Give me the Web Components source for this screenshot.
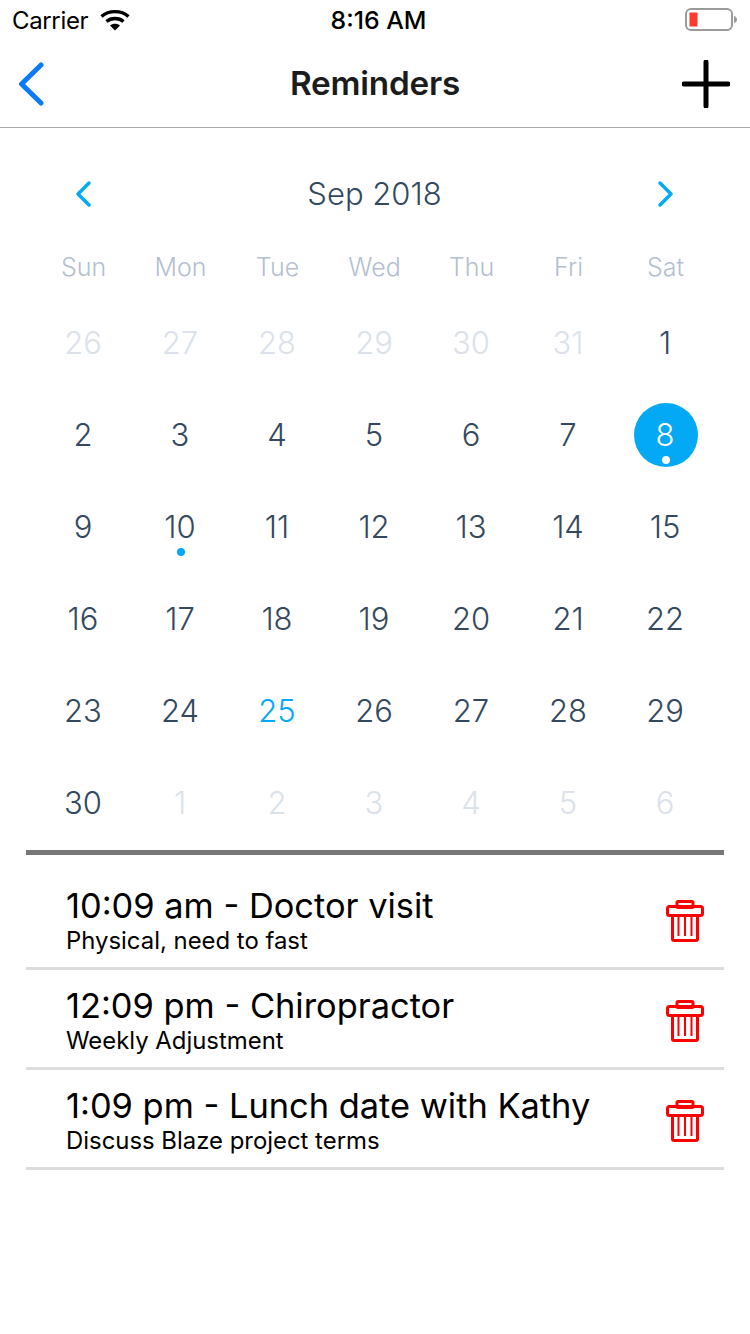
<!DOCTYPE html>
<html><head><meta charset="utf-8"><style>
html,body{margin:0;padding:0;background:#fff}
body{width:750px;height:1334px;overflow:hidden;font-family:Inter,"Liberation Sans",sans-serif}
</style></head><body>
<app-page>
<status-bar></status-bar>
<nav-bar title="Reminders"></nav-bar>
<cal-month></cal-month>
<reminder-list>
<reminder-row title="10:09 am - Doctor visit" sub="Physical, need to fast"></reminder-row>
<reminder-row title="12:09 pm - Chiropractor" sub="Weekly Adjustment"></reminder-row>
<reminder-row title="1:09 pm - Lunch date with Kathy" sub="Discuss Blaze project terms"></reminder-row>
</reminder-list>
</app-page>
<script>
function def(name,html){customElements.define(name,class extends HTMLElement{connectedCallback(){if(this.shadowRoot)return;const r=this.attachShadow({mode:'open'});r.innerHTML=typeof html==='function'?html(this):html;}});}
def('app-page','<style>:host{display:flex;flex-direction:column;width:750px;height:1334px}</style><slot></slot>');
def('status-bar',`<style>:host{display:flex;height:40px;align-items:center;justify-content:space-between;padding:0 12px;box-sizing:border-box;position:relative;color:#000}
.l{display:flex;align-items:center;gap:12px;font-size:24px;letter-spacing:-.35px}
.t{position:absolute;left:0;right:0;text-align:center;font-size:24.800px;font-weight:500;padding-left:7px}
svg{display:block}</style>
<div class="l"><span>Carrier</span><svg width="30" height="22" viewBox="0 0 30 22"><path d="M1.500 7.500C8.800 1 21.200 1 28.500 7.500" fill="none" stroke="#000" stroke-width="3.400" /><path d="M6.500 12.500C11 8.500 19 8.500 23.500 12.500" fill="none" stroke="#000" stroke-width="3.400"/><path d="M10 16.500C12.600 14 17.400 14 20 16.500L15 21.500Z" fill="#000"/></svg></div>
<div class="t">8:16 AM</div>
<svg width="53" height="24" viewBox="0 0 53 24"><rect x="1" y="1" width="46" height="21" rx="5" fill="none" stroke="#9b9b9b" stroke-width="2"/><rect x="4.500" y="4.500" width="8" height="14" fill="#ff3b30"/><path d="M49 8c2 .5 3 2 3 3.500s-1 3-3 3.500z" fill="#9b9b9b"/></svg>`);
def('nav-bar',h=>`<style>:host{display:flex;height:88px;align-items:center;justify-content:space-between;border-bottom:1px solid #aaa;box-sizing:border-box;position:relative;padding:0 20px 0 18px}
.t{position:absolute;left:0;right:0;top:20px;text-align:center;font-size:33.300px;line-height:46px;font-weight:600;color:#1c1c1c;letter-spacing:-.2px}
svg{display:block}</style>
<svg width="28" height="44" viewBox="0 0 28 44"><path d="M23 3 L3.500 22 L23 41" fill="none" stroke="#0a7aff" stroke-width="5" stroke-linecap="round" stroke-linejoin="round"/></svg>
<div class="t">${h.getAttribute('title')}</div>
<svg width="48" height="48" viewBox="0 0 48 48"><path d="M24 2V46M2 24H46" stroke="#000" stroke-width="5" stroke-linecap="round"/></svg>`);
def('cal-month',()=>{
 const days=[];
 [26,27,28,29,30,31].forEach(d=>days.push(['o',d]));
 for(let d=1;d<=30;d++)days.push([d==25?'today':d==8?'sel':'',d,(d==8||d==10)]);
 [1,2,3,4,5,6].forEach(d=>days.push(['o',d]));
 const chev=(d)=>`<svg width="20" height="28" viewBox="0 0 20 28"><path d="${d}" fill="none" stroke="#03a9f4" stroke-width="3.500" stroke-linecap="round" stroke-linejoin="round"/></svg>`;
 return `<style>:host{display:block;padding:0 35px;height:722px;box-sizing:border-box}
.h{display:flex;justify-content:space-between;align-items:center;height:132px;padding:0 40px 0 39px;box-sizing:border-box;color:#34495e;font-size:31px;font-weight:300}
.h svg{display:block}
.h span{position:relative;top:-1px}
.g{display:grid;grid-template-columns:repeat(7,97px);grid-auto-rows:92px;margin-top:6px}
.w{display:grid;grid-template-columns:repeat(7,97px);height:46px;margin-top:-16px;align-items:center;text-align:center;font-size:25px;font-weight:300;color:#b4bfd0}
.d{display:flex;align-items:center;justify-content:center;position:relative;font-size:31px;font-weight:300;color:#34495e;padding-right:1px;box-sizing:border-box}
.o{color:#dbe2ea}.today{color:#03a9f4}
.sel{color:#fff}
.sel::before{content:"";position:absolute;width:64px;height:64px;border-radius:50%;background:#03a9f4;left:50%;top:15px;margin-left:-32px}
.d span{position:relative}
.dot{position:absolute;width:8px;height:8px;border-radius:50%;background:#03a9f4;left:50%;top:68px;margin-left:-4px}
.sel .dot{background:#fff}
</style>
<div class="h">${chev('M15 3L4 14L15 25')}<span>Sep 2018</span>${chev('M5 3L16 14L5 25')}</div>
<div class="w">${['Sun','Mon','Tue','Wed','Thu','Fri','Sat'].map(x=>`<div>${x}</div>`).join('')}</div>
<div class="g">${days.map(([c,d,dot])=>`<div class="d ${c}"><span>${d}</span>${dot?'<i class="dot"></i>':''}</div>`).join('')}</div>`;
});
def('reminder-list','<style>:host{display:block;margin:0 26px;border-top:5px solid #777;padding-top:15px}</style><slot></slot>');
def('reminder-row',h=>`<style>:host{display:flex;height:100px;box-sizing:border-box;border-bottom:3px solid #ddd;align-items:center;justify-content:space-between;padding:0 20px 0 40px;color:#000}
.c{padding-top:2px}
.t{font-size:34.400px;line-height:42px}
.s{font-size:23.900px;line-height:28px}
svg{display:block;margin-top:4px}</style>
<div class="c"><div class="t">${h.getAttribute('title')}</div><div class="s">${h.getAttribute('sub')}</div></div>
<svg width="38" height="42" viewBox="0 0 38 42" fill="none" stroke="#f00" stroke-width="3"><rect x="11" y="1.500" width="16" height="6" rx="1"/><rect x="1.500" y="6.500" width="35" height="9" rx="2"/><path d="M6.500 15.500V39a1.500 1.500 0 0 0 1.500 1.500H30a1.500 1.500 0 0 0 1.500-1.500V15.500"/><path d="M12.500 16V36M19 16V36M25.500 16V36" stroke-width="2"/></svg>`);
</script>
</body></html>
